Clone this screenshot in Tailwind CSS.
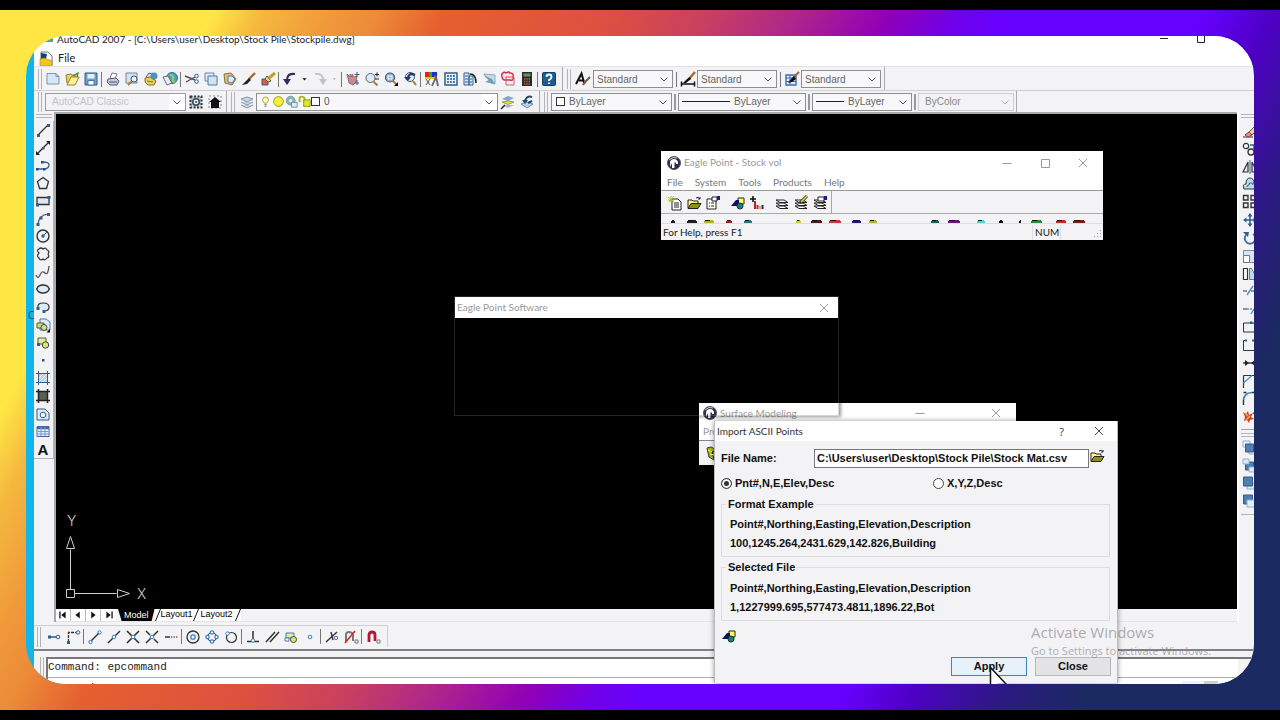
<!DOCTYPE html>
<html lang="en">
<head>
  <meta charset="UTF-8" />
  <meta name="viewport" content="width=device-width, initial-scale=1.0" />
  <title>AutoCAD 2007</title>
  <script src="https://cdn.jsdelivr.net/npm/@tailwindcss/browser@4"></script>
</head>

<body class="bg-black font-['Open_Sans',sans-serif] text-[10px]">
  <div class="h-screen py-2.5">
    <div class="h-full p-[26px] bg-[linear-gradient(118deg,#ffe645_13%,#f5b83f_16%,#f09a3a_20%,#ec8b38_23%,#e5602f_27%,#dd5040_37%,#c84060_43%,#b02888_48%,#9000b8_54%,#7000e8_58%,#6600ff_61%,#6600ff_73%,#5000c8_77%,#2a1a80_83%,#1b2a60_88%)]">
      <div class="relative flex h-full overflow-hidden rounded-[40px] bg-[#10b6ea]">

        <!-- Desktop strip -->
        <div class="flex w-2 shrink-0 items-center overflow-hidden pb-[90px] pl-0.5 text-[#0b3f66]">C</div>

        <!-- AutoCAD -->
        <main class="flex min-w-0 flex-1 flex-col bg-[#f3f2f5]">
          <div class="flex h-3 shrink-0 items-end bg-white pl-[3px]">
            <div class="flex h-3 flex-1 items-start gap-1 overflow-hidden">
              <span class="ml-1 h-1.5 w-3 bg-[#5f9c93]"></span>
              <h1 class="-mt-[5px] text-[10px] leading-4 text-[#222] font-['Lato']">AutoCAD 2007 - [C:\Users\user\Desktop\Stock Pile\Stockpile.dwg]</h1>
            </div>
            <div class="flex h-full w-24 gap-[26px]">
              <svg class="h-3 w-3" viewBox="0 0 12 12" fill="none" stroke="#222"><path d="M2 2.500h8" /></svg>
              <svg class="h-3 w-3" viewBox="0 0 12 12" fill="none" stroke="#222"><path d="M1.500 0v6.500h7V0" /></svg>
            </div>
          </div>
          <nav class="flex h-[18px] shrink-0 items-center gap-1 bg-white pt-[3px] pl-1 text-[11px] text-[#222]">
            <span data-icons="doc"></span>
            <a href="#" class="font-['Lato']">File</a>
          </nav>

          <!-- Toolbars -->
          <div class="flex h-6 shrink-0 items-stretch border-t border-[#e2e1e4] pl-1">
            <div class="flex items-center border-r border-[#aaa] pt-px">
              <span class="mr-px h-5 w-1 border-x border-[#b4b3b7]"></span>
              <div class="flex items-center pr-1" data-tools="new open save | plot preview publish web | cut copy paste brush match | undo caret redo caretoff | pan zoom zoomwin zoomprev | props center palettes sheet markup calc | help"></div>
            </div>
            <div class="flex items-center border-r border-[#aaa] pl-1 pr-[3px] pt-px">
              <span class="mr-1 h-5 w-1 border-x border-[#b4b3b7]"></span>
              <span data-icons="textstyle"></span>
              <div class="ml-0.5 flex h-[18px] w-20 items-center border border-[#8f8f93] bg-[#f8f7fa] pl-[3px]">
                <select aria-label="Text style" class="min-w-0 flex-1 appearance-none bg-transparent text-[#666] font-['Liberation_Sans']"><option>Standard</option></select><span data-icons="chev"></span>
              </div>
              <span class="mx-[3px] h-[15px] w-px bg-[#777]"></span>
              <span data-icons="dimstyle"></span>
              <div class="ml-px flex h-[18px] w-20 items-center border border-[#8f8f93] bg-[#f8f7fa] pl-[3px]">
                <select aria-label="Dimension style" class="min-w-0 flex-1 appearance-none bg-transparent text-[#666] font-['Liberation_Sans']"><option>Standard</option></select><span data-icons="chev"></span>
              </div>
              <span class="mx-[3px] h-[15px] w-px bg-[#777]"></span>
              <span data-icons="tablestyle"></span>
              <div class="ml-px flex h-[18px] w-20 items-center border border-[#8f8f93] bg-[#f8f7fa] pl-[3px]">
                <select aria-label="Table style" class="min-w-0 flex-1 appearance-none bg-transparent text-[#666] font-['Liberation_Sans']"><option>Standard</option></select><span data-icons="chev"></span>
              </div>
            </div>
          </div>
          <div class="flex h-[22px] shrink-0 items-stretch border-t border-[#cfced2] pl-1">
            <div class="flex items-center border-r border-[#aaa] pr-0.5">
              <span class="mr-[3px] h-5 w-1 border-x border-[#b4b3b7]"></span>
              <div class="flex h-[18px] w-[141px] items-center border border-[#9b9b9f] bg-[#f3f2f5] pl-1.5">
                <select aria-label="Workspace" class="min-w-0 flex-1 appearance-none bg-transparent text-[#c4c3c7] font-['Liberation_Sans']"><option>AutoCAD Classic</option></select>
                <span class="flex h-full items-center bg-white" data-icons="chev"></span>
              </div>
              <div class="flex items-center" data-tools="gear home"></div>
            </div>
            <div class="flex items-center border-r border-[#aaa] pl-1 pr-[3px]">
              <span class="mr-0.5 h-5 w-1 border-x border-[#b4b3b7]"></span>
              <div class="flex" data-tools="layers"></div>
              <div class="flex h-[18px] w-[242px] items-center border border-[#8f8f93] bg-[#f8f7fa] pl-0.5">
                <span class="flex" data-icons="bulb sun freeze lock"></span>
                <span class="h-[9px] w-[9px] border border-[#333] bg-white"></span>
                <select aria-label="Layer" class="ml-1 min-w-0 flex-1 appearance-none bg-transparent text-[#555] font-['Liberation_Sans']"><option>0</option></select>
                <span class="flex h-full items-center bg-white" data-icons="chev"></span>
              </div>
              <div class="flex items-center" data-tools="layercur layerprev"></div>
            </div>
            <div class="flex items-center border-r border-[#aaa] pl-1 pr-0.5">
              <span class="mr-[3px] h-5 w-1 border-x border-[#b4b3b7]"></span>
              <div class="flex h-[18px] w-[121px] items-center border border-[#8f8f93] bg-[#f8f7fa] pl-1">
                <span class="mr-1 h-[9px] w-[9px] border border-[#333] bg-white"></span>
                <select aria-label="Colour" class="min-w-0 flex-1 appearance-none bg-transparent text-[#666] font-['Liberation_Sans']"><option>ByLayer</option></select><span data-icons="chev"></span>
              </div>
              <span class="mx-0.5 h-4 w-0.5 bg-[#999]"></span>
              <div class="flex h-[18px] w-32 items-center gap-1 border border-[#8f8f93] bg-[#f8f7fa] pl-[3px]">
                <span class="h-px w-12 bg-[#222]"></span>
                <select aria-label="Linetype" class="min-w-0 flex-1 appearance-none bg-transparent text-[#666] font-['Liberation_Sans']"><option>ByLayer</option></select><span data-icons="chev"></span>
              </div>
              <span class="mx-0.5 h-4 w-0.5 bg-[#999]"></span>
              <div class="flex h-[18px] w-[100px] items-center gap-1 border border-[#8f8f93] bg-[#f8f7fa] pl-[3px]">
                <span class="h-px w-7 bg-[#222]"></span>
                <select aria-label="Lineweight" class="min-w-0 flex-1 appearance-none bg-transparent text-[#666] font-['Liberation_Sans']"><option>ByLayer</option></select><span data-icons="chev"></span>
              </div>
              <span class="mx-0.5 h-4 w-0.5 bg-[#999]"></span>
              <div class="flex h-[18px] w-24 items-center border border-[#d0cfd3] bg-[#f3f2f5] pl-1.5">
                <select aria-label="Plot style" disabled class="min-w-0 flex-1 appearance-none bg-transparent text-[#888] font-['Liberation_Sans']"><option>ByColor</option></select><span class="opacity-40" data-icons="chev"></span>
              </div>
            </div>
          </div>

          <div class="flex min-h-0 flex-1">
            <!-- Draw toolbar -->
            <div class="w-5 shrink-0 pt-0.5">
              <div class="mx-auto mb-[3px] h-1 w-4 border-y border-[#b4b3b7]"></div>
              <div class="flex h-[338px] flex-col border-r border-b border-[#b4b3b7]" data-tools="line xline pline polygon rect arc circle cloud spline ellipse earc insert block point hatch gradient region table text"></div>
            </div>

            <!-- Drawing area -->
            <section class="flex min-w-0 flex-1 flex-col border-l-2 border-t-2 border-[#a9a8ab]">
              <div class="flex min-h-0 flex-1 items-end bg-black pb-1 pl-2">
                <svg class="h-[96px] w-[90px]" viewBox="0 0 90 96" fill="none" stroke="#cfcfcf">
                  <path d="M2.500 80.500h8v8h-8zM6.500 80.500v-40M10.500 84.500h42M6.500 27.500l4 12h-8zM65.500 84.500l-12-4v8z" />
                  <text x="3" y="17" fill="#cfcfcf" stroke="none" class="text-[14px] font-light font-['Inter']">Y</text>
                  <text x="73" y="90" fill="#cfcfcf" stroke="none" class="text-[14px] font-light font-['Inter']">X</text>
                </svg>
              </div>
              <div class="flex h-[13px] shrink-0 items-center border-b border-[#e4e3e7] font-['Liberation_Sans'] text-[9px] text-black">
                <div class="flex h-full items-center divide-x divide-[#bbb] bg-white" data-nav="first prev next last"></div>
                <button class="ml-0.5 h-full bg-black px-1.5 text-white [clip-path:polygon(0_0,100%_0,92%_100%,10%_100%)]">Model</button>
                <button class="flex h-full items-center bg-white"><svg class="h-3 w-1.5" viewBox="0 0 6 12" stroke="#111"><path d="M5.500 0L.5 12" /></svg>Layout1</button>
                <button class="flex h-full items-center gap-0.5 bg-white"><svg class="h-3 w-1.5" viewBox="0 0 6 12" stroke="#111"><path d="M5.500 0L.5 12" /></svg>Layout2<svg class="h-3 w-1.5" viewBox="0 0 6 12" stroke="#111"><path d="M5.500 0L.5 12" /></svg></button>
              </div>
            </section>

            <!-- Modify toolbar -->
            <div class="w-[17px] shrink-0 overflow-hidden border-l-2 border-white pl-0.5 pt-0.5">
              <div class="mb-1 h-1 w-4 border-y border-[#b4b3b7]"></div>
              <div class="flex h-[303px] flex-col" data-tools="erase copyobj mirror offset array move rotate scale stretch trim extend breakpt break join chamfer fillet explode"></div>
              <div class="mt-1 mb-[3px] w-4 border-t border-[#a0a0a4]"></div>
              <div class="mb-0.5 h-1 w-4 border-y border-[#b4b3b7]"></div>
              <div class="flex h-[76px] flex-col border-b border-[#b4b3b7] pb-1" data-tools="front back above under"></div>
            </div>
          </div>

          <!-- Object snap toolbar -->
          <div class="mt-[3px] flex h-[22px] w-fit shrink-0 items-center border-r border-t border-[#cfced2] pl-[3px] pr-[5px]">
            <span class="mr-[3px] h-5 w-1 border-x border-[#b4b3b7]"></span>
            <div class="flex items-center" data-tools="track from | endp midp inter appint ext | cen quad tan | perp par ins node | near none | osnap"></div>
          </div>

          <!-- Command line -->
          <div class="mt-0.5 shrink-0 border-t-2 border-[#808084] pt-1.5">
            <div class="flex h-[27px] pl-1.5">
              <span class="mr-0.5 w-1 border-x border-[#b4b3b7]"></span>
              <div class="min-w-0 flex-1 border-l-2 border-t-2 border-[#77777b] bg-white font-['Liberation_Mono'] text-[11px] text-[#222]">
                <p class="h-[19px] border-b border-[#aaa] pt-0.5 leading-[13px]">Command: epcommand</p>
                <div class="flex h-1.5 overflow-hidden leading-[13px]">
                  <label for="cmd" class="pt-1">Command:</label>
                  <input id="cmd" class="min-w-0 flex-1" />
                  <span class="mt-[3px] mr-5 w-9 border-r-[14px] border-[#cfced2] bg-[#f3f2f5]"></span>
                </div>
              </div>
              <div class="w-4 border-t-2 border-[#77777b] bg-[#f3f2f5] pl-1 pt-0.5" data-icons="up"></div>
            </div>
          </div>
        </main>

        <!-- Surface Modeling -->
        <section class="absolute left-[673px] top-[367px] flex h-[62px] w-[317px] flex-col bg-white text-[#999] font-['Lato']">
          <div class="flex h-5 items-center gap-0.5 pl-[3px]">
            <span data-icons="eagle"></span>
            <h2 class="flex-1">Surface Modeling</h2>
            <span class="flex gap-[60px] pr-3" data-icons="min close"></span>
          </div>
          <p class="h-[17px] w-[15px] overflow-hidden pl-1 leading-4">Products</p>
          <div class="flex-1 border-t border-[#888] bg-[#f3f2f5] pl-1.5 pt-1" data-icons="surf"></div>
        </section>

        <!-- Eagle Point Software -->
        <section class="absolute left-[428px] top-[260px] flex h-[120px] w-[385px] flex-col border border-[#777]/30 shadow-[2px_1px_3px_rgba(0,0,0,0.4)]">
          <div class="flex h-[21px] items-center justify-between bg-white pl-0.5 pr-1.5 text-[#999] font-['Lato']">
            <h2>Eagle Point Software</h2>
            <span data-icons="close"></span>
          </div>
        </section>

        <!-- Eagle Point -->
        <section class="absolute left-[635px] top-[115px] flex h-[89px] w-[442px] flex-col bg-white font-['Lato']">
          <div class="flex h-6 items-center gap-0.5 pl-[5px] text-[#999]">
            <span data-icons="eagle"></span>
            <h2 class="flex-1">Eagle Point - Stock vol</h2>
            <span class="flex gap-[22px] pr-3" data-icons="min max close"></span>
          </div>
          <nav class="flex h-[17px] items-center gap-3 border-b border-[#999] pl-1.5 text-[#777]">
            <a href="#">File</a><a href="#">System</a><a href="#">Tools</a><a href="#">Products</a><a href="#">Help</a>
          </nav>
          <div class="flex h-6 items-center border-b border-[#aaa] bg-[#f3f2f5] pl-1">
            <div class="flex h-full items-center border-r border-[#aaa] pr-0.5 pt-px">
              <div class="flex" data-tools="epnew epopen epprops"></div>
              <div class="ml-1.5 flex" data-tools="shapes graph"></div>
              <div class="ml-1.5 flex" data-tools="stack stackpen stackcard"></div>
            </div>
          </div>
          <div class="flex h-[9px] items-end bg-[#f3f2f5] pl-2" data-icons="strip"></div>
          <div class="flex flex-1 items-center border-t border-[#dddce0] bg-[#f3f2f5] pt-px pl-0.5 text-[#222]">
            <span class="flex-1">For Help, press F1</span>
            <span class="w-[29px] border-x border-[#dddce0] pl-0.5">NUM</span>
            <span class="ml-8" data-icons="grip"></span>
          </div>
        </section>

        <!-- Import ASCII Points -->
        <form class="absolute left-[688px] top-[385px] flex h-[262px] w-[404px] flex-col border-x border-[#bbb] bg-[#f3f2f5] shadow-[0_0_5px_rgba(0,0,0,0.4)] font-['Liberation_Sans'] text-[11px] font-bold leading-[13px] text-[#111]">
          <div class="flex h-5 items-center bg-white pl-0.5 pr-2.5 font-['Lato'] text-[10px] font-normal text-[#333]">
            <h2 class="flex-1">Import ASCII Points</h2>
            <button type="button" class="mr-[27px] font-['Open_Sans'] text-[11px]">?</button>
            <button type="button" aria-label="Close dialog" class="text-[#444]" data-icons="close"></button>
          </div>
          <div class="flex items-center pl-1.5 pt-[7px]">
            <label for="file" class="w-[93px]">File Name:</label>
            <input id="file" value="C:\Users\user\Desktop\Stock Pile\Stock Mat.csv" class="h-[19px] w-[275px] border border-[#777] bg-white px-0.5" />
            <button type="button" aria-label="Browse" class="pb-1" data-icons="epopen"></button>
          </div>
          <div class="flex h-[30px] items-center pl-1.5">
            <label class="flex w-[212px] items-center gap-[3px]"><input type="radio" name="fmt" checked class="h-[11px] w-[11px] appearance-none rounded-full border border-[#444] bg-white checked:bg-[#333] checked:shadow-[inset_0_0_0_2px_white]" />Pnt#,N,E,Elev,Desc</label>
            <label class="flex items-center gap-[3px]"><input type="radio" name="fmt" class="h-[11px] w-[11px] appearance-none rounded-full border border-[#444] bg-white checked:bg-[#333] checked:shadow-[inset_0_0_0_2px_white]" />X,Y,Z,Desc</label>
          </div>
          <fieldset class="ml-1.5 mr-[7px] h-[59px] border border-[#dddce0] pl-2">
            <legend class="-ml-1 px-0.5">Format Example</legend>
            <p class="pt-[7px]">Point#,Northing,Easting,Elevation,Description</p>
            <p class="pt-1.5">100,1245.264,2431.629,142.826,Building</p>
          </fieldset>
          <fieldset class="ml-1.5 mr-[7px] mt-1 h-[60px] border border-[#dddce0] pl-2">
            <legend class="-ml-1 px-0.5">Selected File</legend>
            <p class="pt-2">Point#,Northing,Easting,Elevation,Description</p>
            <p class="pt-1.5">1,1227999.695,577473.4811,1896.22,Bot</p>
          </fieldset>
          <div class="pl-1.5 pt-[7px]" data-icons="shapes"></div>
          <div class="mt-auto flex justify-end gap-2 pr-1.5 pb-[7px]">
            <button type="button" class="h-[19px] w-[76px] border border-[#3b86c6] bg-[#e6f1fb]">Apply</button>
            <button type="button" class="h-[19px] w-[76px] border border-[#b8b8bc] bg-[#e3e2e5]">Close</button>
          </div>
        </form>

        <!-- Activation notice -->
        <div class="absolute left-[1005px] top-[586px] text-[#8a8a8e]/70">
          <p class="text-[15px] leading-5">Activate Windows</p>
          <p class="text-[11px] leading-[18px]">Go to Settings to activate Windows.</p>
        </div>

        <svg class="absolute left-[963px] top-[630px] h-7 w-[18px]" viewBox="0 0 18 28" fill="#fff" stroke="#111" stroke-width="1.500"><path d="M1.500 1.500v22l5-4 3 7 3-1.500-3-6.500h8z" /></svg>
      </div>
    </div>
  </div>

  <script>
    const B = '#2f5f8f', K = '#333', L = '#bcd9ee';
    const stack = '<path d="M2 5h8l4 2.500H6zM2 8h8l4 2.500H6zM2 11h8l4 2.500H6z" fill="#fff" stroke="#222"/>';
    const snapbox = '<path d="M12 11h3v3h-3z" fill="#fff" stroke="#777"/>';

    const icons = {
      doc: '<path d="M3 1h7l4 4v9H3z" fill="#fff" stroke="#678"/><path d="M3 2l6 1-1 5-5 1z" fill="#1d3f70"/><path d="M2 8l4-1 8 3v5H2z" fill="#f2c71c" stroke="#a67f10" stroke-width=".6"/>',
      new: '<path d="M2 2.500h9l3 3V13H2z" fill="#d5e8f6" stroke="#7f95ad"/><path d="M11 2.500v3h3" stroke="#7f95ad"/>',
      open: '<path d="M2 4l5-1 1 1h3v8H3z" fill="#e8d35c" stroke="#96802a"/><path d="M3 14l4-8h8l-4 8z" fill="#fff0a0" stroke="#96802a"/><path d="M9 5l5-3-1 4" stroke="#3a8a3a" stroke-width="1.300"/>',
      save: '<path d="M2 2h12v12H2z" fill="#6f9fd0" stroke="#2f5f8f"/><path d="M4.500 3h7v4.500h-7z" fill="#e6f1fb"/><path d="M5 9.500h6V14H5z" fill="#fff" stroke="#2f5f8f" stroke-width=".8"/>',
      plot: '<path d="M5 7l2-5 5 1-2 5z" fill="#fff" stroke="#778"/><path d="M3 8l8-1 3 3-2 4H5l-3-3z" fill="#c9c9dc" stroke="#557"/><path d="M4 11h8" stroke="#557"/>',
      preview: '<path d="M2 2h11v10H2z" fill="#cfe3f3" stroke="#6f8aa5"/><circle cx="10" cy="8" r="3" fill="#e8f4ff" stroke="#456"/><path d="M8 10l-4 4" stroke="#b07a30" stroke-width="2"/>',
      publish: '<path d="M3 6l3-4 7 2-2 5z" fill="#cfe3f3" stroke="#557"/><circle cx="11" cy="5" r="3.500" fill="#4a90c0"/><path d="M2 7l5-1 6 4-2 4H5l-3-3z" fill="#e8d05a" stroke="#86702a"/><path d="M4 10l6 1" stroke="#86702a"/>',
      web: '<circle cx="10" cy="7" r="5.500" fill="#4da3b8" stroke="#2f6f8f"/><path d="M8 4q4 0 3 4t2 2" stroke="#8fd07a" stroke-width="2"/><path d="M1 6l5-1 4 7-5 2z" fill="#e8eef6" stroke="#667"/>',
      cut: '<path d="M1 5l10 4M2 11l9-5" stroke="#555" stroke-width="1.400"/><circle cx="12.500" cy="5" r="1.800" stroke="#2f5f8f"/><circle cx="12.500" cy="10.500" r="1.800" stroke="#2f5f8f"/>',
      copy: '<path d="M2 2h9v8H2z" fill="#dcebf7" stroke="#6f8aa5"/><path d="M5 5h9v9H5z" fill="#cfe3f3" stroke="#4f7aa5"/>',
      paste: '<path d="M2 3l7-1 5 6-4 6-7-2z" fill="#e0c070" stroke="#8a7040"/><path d="M6 5h4l3 3-3 4-4-1z" fill="#dcebf7" stroke="#4f7aa5"/>',
      brush: '<path d="M14 2L8 8" stroke="#a86a32" stroke-width="2.400"/><path d="M8 7l2 2-4 4-5 1 3-3z" fill="#222"/>',
      match: '<path d="M2 8h6v6H2z" fill="#e85a30" stroke="#335a99"/><path d="M15 2L9 7" stroke="#c8a030" stroke-width="3"/><path d="M7 5l4 5-3 1-3-3z" fill="#f0d860" stroke="#555"/>',
      undo: '<path d="M13 3Q5 2 5 9v4" stroke="#2a2f66" stroke-width="2.200"/><path d="M1 8h8l-4 6z" fill="#2a2f66"/>',
      redo: '<path d="M3 3q8-1 8 6v4" stroke="#c2c2c6" stroke-width="2"/><path d="M7 8h8l-4 6z" fill="#c2c2c6"/>',
      caret: '<path d="M5 7h6l-3 3z" fill="#111"/>',
      caretoff: '<path d="M6 7h4L8 9.500z" fill="#aaa"/>',
      pan: '<path d="M2 3l3 3V3l2 3V3l2 3 3-1-1 6-3 3-4-2z" fill="#c98a8a" stroke="#8a5560" stroke-width=".8"/><path d="M12 1v5M9.500 3.500h5M12 9v5M10 12h4" stroke="#2f5f8f"/>',
      zoom: '<circle cx="6.500" cy="7" r="4.500" fill="#dcebf7" stroke="#567"/><path d="M9.500 10.500l4 4" stroke="#b07a30" stroke-width="2"/><path d="M11 3.500h4M13 1.500v4M11 8h4" stroke="#222"/>',
      zoomwin: '<circle cx="7" cy="6.500" r="4.500" fill="#8fb4d8" stroke="#456" stroke-width="1.200"/><path d="M5 5h4v3H5z" stroke="#fff"/><path d="M10 10l3 3" stroke="#b07a30" stroke-width="2"/><path d="M15 11v4h-4z" fill="#000"/>',
      zoomprev: '<circle cx="8" cy="6" r="4.500" fill="#dcebf7" stroke="#456"/><path d="M13 4Q7 1 6 7" stroke="#23366f" stroke-width="2.400"/><path d="M2 6h7l-3 4z" fill="#23366f"/><path d="M11 10l3 4" stroke="#b07a30" stroke-width="2"/>',
      props: '<path d="M1 1h4v5H1z" fill="#e02020"/><path d="M5 1h3v5H5z" fill="#20b020"/><path d="M8 1h5v5H8z" fill="#2030d0"/><path d="M1 6h11v2H1z" fill="#e8c020"/><path d="M2 8l4 6M6 8l-4 6" stroke="#555"/><path d="M10 5l2 1 2 9M12 6l-4 9" stroke="#666" stroke-width="1.800"/>',
      center: '<path d="M2 2h12v12H2z" fill="#e8f0f8" stroke="#2f5f8f" stroke-width="1.500"/><path d="M4 4h2v2H4zM7 4h2v2H7zM10 4h2v2h-2zM4 7h2v2H4zM7 7h2v2H7zM10 7h2v2h-2zM4 10h2v2H4zM7 10h2v2H7zM10 10h2v2h-2z" fill="#4f7aa5"/>',
      palettes: '<path d="M2 2h5v12H2zM7 5h4v9H7z" fill="#dcebf7" stroke="#2f5f8f"/><path d="M3 5h3M3 8h3M3 11h3M8 8h2M8 11h2" stroke="#2f5f8f"/><path d="M8 3q6 0 6 9" stroke="#222" stroke-width="1.600"/>',
      sheet: '<path d="M3 3l11 1v9l-4-1z" fill="#c5dbe8" stroke="#8fa9bd"/><path d="M2 4l9 4 3 5-10-2 4-2z" fill="#6f9fb8"/>',
      markup: '<path d="M2 3q2-3 4-1 3-2 4 0 4 0 3 4 1 4-3 3H4q-3-2-2-6z" fill="#fbdfe5" stroke="#c83050" stroke-width="1.400"/><path d="M6 6h8v8H6z" stroke="#d05a70"/>',
      calc: '<path d="M3 1h10v14H3z" fill="#2b2b2b"/><path d="M4.500 2.500h7v3h-7z" fill="#5a9a5a"/><path d="M5 8h6M5 10.500h6M5 13h6" stroke="#d05a40" stroke-width="1.400" stroke-dasharray="1.400 .9"/>',
      help: '<rect x="1.500" y="1.500" width="13" height="13" rx="1" fill="#1f5c94" stroke="#123e68"/><path d="M5.500 6q0-2.500 2.500-2.500T10.500 6Q10.500 7.500 8 9v1M8 11.500v1.500" stroke="#fff" stroke-width="1.800"/>',
      textstyle: '<path d="M1 13L6.500 2.500l3 10.500M4 9.500h5" stroke="#111" stroke-width="2"/><path d="M15 6l-5 5-2 3" stroke="#7a5a3a" stroke-width="2"/>',
      dimstyle: '<path d="M1 13h14M1.500 10.500v5M14.500 10.500v5" stroke="#111" stroke-width="1.500"/><path d="M15 1L9 8" stroke="#a86a32" stroke-width="2.400"/><path d="M10 6l1 2-5 4H3l4-4z" fill="#111"/>',
      tablestyle: '<path d="M2 4h10v10H2z" fill="#dcebf7" stroke="#3d6fb0" stroke-width="1.400"/><path d="M2 7h10M2 10.500h10M6 4v10" stroke="#3d6fb0"/><path d="M15 1L9 7" stroke="#a86a32" stroke-width="2.200"/><path d="M10 5l2 3-4 3-4 1 3-4z" fill="#111"/>',
      chev: '<path d="M4.500 6.500L8 10l3.500-3.500" stroke="#555"/>',
      gear: '<path d="M2.500 2.500h11v11h-11z" fill="#c5d0da" stroke="#333" stroke-dasharray="2 1.500" stroke-width="2"/><circle cx="8" cy="8" r="3.200" fill="#eef3f8" stroke="#345" stroke-width="1.500"/><circle cx="8" cy="8" r="1" fill="#345"/>',
      home: '<path d="M2 2h12v12H2z" stroke="#888" stroke-dasharray="2 2"/><path d="M8 3l6 5h-2v6H4V8H2z" fill="#111"/>',
      layers: '<path d="M2 5l6-2 6 2-6 3zM2 8l6 3 6-3M2 11l6 3 6-3" fill="#c8d6e4" stroke="#7f97b0"/>',
      bulb: '<path d="M4.500 6a3.500 3.500 0 117 0q0 2-2 4h-3q-2-2-2-4z" fill="#ffffb0" stroke="#998a30"/><path d="M6.500 12h3M7 14h2" stroke="#555"/>',
      sun: '<circle cx="8" cy="8" r="6" fill="#f5f032" stroke="#8a8a20"/>',
      freeze: '<circle cx="7" cy="7" r="5.500" fill="#8fb0b8" stroke="#7f97a0"/><circle cx="7" cy="7" r="2" fill="#cfe"/><path d="M8 9h7v6H8z" fill="#dcebf7" stroke="#5a80a0"/>',
      lock: '<path d="M2 9V5q0-3 2.500-3T8 4v3" stroke="#a8b818" stroke-width="2.400"/><path d="M7 6h8v8H7z" fill="#e0e82a" stroke="#7a8a10"/>',
      layercur: '<path d="M2 5l6-3 6 2-6 3z" fill="#7fa8cc"/><path d="M2 8l6-1 6 1-6 2.500z" fill="#e8dc50" stroke="#998a30" stroke-width=".8"/><path d="M4 12l4-1 6 0-6 3z" fill="#a8b8c8"/><path d="M1 15l4-4" stroke="#222" stroke-width="1.400"/>',
      layerprev: '<path d="M2 10l6-2 6 2-6 4z" fill="#b8d0e4" stroke="#6f8fb0"/><path d="M13 3Q7 1 6 8M13 7l-4 2" stroke="#23466f" stroke-width="2"/><path d="M3 6h6l-3 4z" fill="#23466f"/>',

      line: `<path d="M3 13L13 3" stroke="${K}" stroke-width="1.300"/><path d="M2 12h3v3H2zM12 2h3v3h-3z" fill="${B}"/>`,
      xline: `<path d="M2 14L14 2" stroke="${K}" stroke-width="1.500"/><path d="M1 11v4h4zM11 1h4v4z" fill="#222"/><path d="M7 7h2.500v2.500H7z" fill="${B}"/>`,
      pline: `<path d="M2 12h8q4-1 4-4t-6-3" stroke="${B}" stroke-width="1.300"/><path d="M1 11h2.500v2.500H1zM8 11h2.500v2.500H8zM6 4h2.500v2.500H6z" fill="#1f4f80"/>`,
      polygon: `<path d="M8 2.500l5.500 4-2 7h-7l-2-7z" fill="#eef3f8" stroke="${K}" stroke-width="1.300"/>`,
      rect: `<path d="M2 4.500h12v7H2z" fill="#e0e6ee" stroke="${K}" stroke-width="1.300"/><path d="M1 10.500h3v3H1zM12.500 3h3v3h-3z" fill="${B}"/>`,
      arc: `<path d="M3 13Q4 4 13 3" stroke="#456" stroke-width="1.200"/><path d="M1.500 12h3v3h-3zM4.500 5.500h3v3h-3zM12 2h3v3h-3z" fill="${B}"/>`,
      circle: `<circle cx="8" cy="8" r="6" fill="#eef3f8" stroke="${K}" stroke-width="1.400"/><path d="M8 8l4-4" stroke="${B}"/><circle cx="8" cy="8" r="1.700" fill="${B}"/>`,
      cloud: `<path d="M4 7q-3-3 0-4 2-2 4 0 3-2 4 1 3 1 1 4 2 3-1 4-2 3-4 1-3 2-4-1-3-2 0-5z" fill="#eef3f8" stroke="${K}" stroke-width="1.200"/>`,
      spline: '<path d="M1 11q2 5 4 0t5-2 4-7" stroke="#555" stroke-width="1.300"/>',
      ellipse: `<ellipse cx="8" cy="8" rx="6" ry="4" fill="#dcebf7" stroke="${K}" stroke-width="1.400"/><path d="M1 7h2v2H1zM13 7h2v2h-2zM7 3h2v2H7z" fill="${B}"/>`,
      earc: `<path d="M3 9q-1-5 5-5t6 4-5 4" stroke="${K}" fill="#dcebf7" stroke-width="1.200"/><path d="M1.500 8h3v3h-3zM7.500 11h3v3h-3z" fill="${B}"/>`,
      insert: '<path d="M5 2h6l4 3v8H5z" fill="#dcebf7" stroke="#4f7aa5"/><path d="M2 6h7v5H2z" fill="#d8dc68" stroke="#555"/><circle cx="9" cy="10.500" r="3" fill="#d0e088" stroke="#444"/><path d="M15 12v3.500h-3.500z" fill="#000"/>',
      block: '<path d="M3 3h8v6H3z" fill="#e8ec90" stroke="#555"/><circle cx="10.500" cy="10" r="3.200" fill="#d8e878" stroke="#444"/><path d="M2 8h3v3H2z" fill="#2f5f8f"/>',
      point: `<path d="M7 7h2.500v2.500H7z" fill="${B}"/>`,
      hatch: `<path d="M3.500 3.500h9v9h-9z" fill="#b8d0ea"/><path d="M3.500 1v14M12.500 1v14M1 3.500h14M1 12.500h14" stroke="${B}"/><path d="M4 8l4-4M4 12l8-8M8 12l4-4" stroke="#fff"/>`,
      gradient: '<path d="M3.500 3.500h9v9h-9z" fill="#5a6050"/><path d="M3.500 1v14M12.500 1v14M1 3.500h14M1 12.500h14" stroke="#222" stroke-width="1.500"/>',
      region: `<path d="M2 3h8l4 4v7H2z" fill="#dcebf7" stroke="${B}"/><circle cx="8" cy="9" r="2.800" fill="#fff" stroke="${B}"/>`,
      table: '<path d="M2 3.500h12v10H2z" fill="#e6eefb" stroke="#4468a8"/><path d="M2 5h12" stroke="#4468a8" stroke-width="2.400"/><path d="M3 8.500h10M3 11h10M6 4v9M10 4v9" stroke="#7a98cc"/>',
      text: '<text x="2.500" y="14" font-size="15" font-weight="bold" font-family="Liberation Sans" fill="#111">A</text>',

      erase: '<path d="M1 14h10" stroke="#333"/><path d="M14 2L7 9l3 3 6-6" fill="#e8d890" stroke="#555"/><path d="M7 9l-4 3 3 2 4-2z" fill="#e090a0" stroke="#a03030"/>',
      copyobj: `<circle cx="4" cy="5" r="2.700" stroke="${K}" stroke-width="1.200"/><circle cx="9" cy="11" r="3" stroke="${K}" stroke-width="1.300"/><path d="M8 4h4v5" stroke="${B}" stroke-width="1.600"/>`,
      mirror: `<path d="M6 3v10H1zM10 3v10h5z" fill="#dcebf7" stroke="${K}" stroke-width="1.200"/><path d="M8 1v14" stroke="${B}"/>`,
      offset: `<path d="M2 13q-2-5 2-5 0-6 4-6t4 6q4 0 2 5z" fill="${L}" stroke="${K}"/><path d="M5 11q0-2 2-2 0-3 2-2 2 0 2 2" stroke="${B}"/>`,
      array: `<path d="M1.500 1.500h4.500v4.500h-4.500zM9 1.500h4.500v4.500H9zM1.500 9h4.500v4.500h-4.500zM9 9h4.500v4.500H9z" stroke="${K}" stroke-width="1.400"/>`,
      move: `<path d="M8 2v12M2 8h12" stroke="${B}" stroke-width="1.600"/><path d="M5.500 4.500L8 1l2.500 3.500zM5.500 11.500L8 15l2.500-3.500zM4.500 5.500L1 8l3.500 2.500zM11.500 5.500L15 8l-3.500 2.500z" fill="${B}"/>`,
      rotate: `<path d="M4 5a5.300 5.300 0 107-1" stroke="#456f98" stroke-width="1.900"/><path d="M1 2h6l-1 5z" fill="${B}"/>`,
      scale: '<path d="M1.500 2.500h13v12h-13z" fill="#d5e3f5" stroke="#888"/><path d="M1.500 7.500h6v7h-6z" fill="#fff" stroke="#777"/>',
      stretch: `<path d="M1.500 2.500h4v11h-4z" fill="#fff" stroke="${K}" stroke-width="1.200"/><path d="M7.500 13.500v-11h2l6 11z" fill="${L}" stroke="#678"/>`,
      trim: `<path d="M1 8h4M9 8h6" stroke="${K}"/><path d="M5 12l6-9" stroke="#4f8fd0" stroke-width="1.400"/>`,
      extend: `<path d="M1 8h4" stroke="${K}"/><path d="M5 8h6" stroke="${B}" stroke-dasharray="2 1"/><path d="M9 13l6-10" stroke="#4f8fd0" stroke-width="1.300"/>`,
      breakpt: `<path d="M1.500 4h14v9h-14z" fill="#eef3f8" stroke="${K}"/><path d="M8 2.500h2.500V5H8z" fill="${B}"/>`,
      break: `<path d="M4 3.500H1.500v10h14v-10H11" fill="#eef3f8" stroke="${K}"/><path d="M3 2.500h2v2H3zM10 2.500h2v2h-2z" fill="${B}"/>`,
      join: '<path d="M1 8h14" stroke="#222" stroke-width="1.300"/><path d="M3 5l4 3-4 3zM13 5L9 8l4 3z" fill="#222"/>',
      chamfer: `<path d="M1.500 15V2.500M1.500 2.500h14" stroke="${K}" stroke-width="1.200"/><path d="M1.500 10L10 2.500" stroke="#4f8fd0" stroke-width="1.300"/>`,
      fillet: `<path d="M1.500 15V10M10 2.500h6M1.500 2.500h3" stroke="${K}" stroke-width="1.400"/><path d="M1.500 10Q2 3 10 2.500" stroke="#3f7fc0" stroke-width="1.700"/>`,
      explode: '<path d="M1 4l3 2 2-3 1 4 4-2-2 4 3 2-4 1-1 3-2-3-3 1 1-4z" fill="#d04030"/><path d="M4 12l4-4M3 5l3 3" stroke="#f0b030" stroke-width="1.600"/><path d="M11 6l3-4" stroke="#3f7fc0" stroke-width="1.500"/>',
      front: '<path d="M1 1h7v6H1zM7 9h7v5H7z" fill="#e8f2fb" stroke="#8fb0d0"/><path d="M3.500 4h8v8h-8z" fill="#4f7fb0" stroke="#2f5f8f"/>',
      back: '<path d="M3.500 4h8v8h-8z" fill="#4f7fb0" stroke="#2f5f8f"/><path d="M1 1h6v5H1zM7 9h7v5H7z" fill="#dcebf7" stroke="#8fb0d0"/>',
      above: '<path d="M5 8h9v6H5z" fill="#dcebf7" stroke="#8fb0d0"/><path d="M1.500 2h9v9h-9z" fill="#4f7fb0" stroke="#2f5f8f"/>',
      under: '<path d="M1.500 2h9v9h-9z" fill="#4f7fb0" stroke="#2f5f8f"/><path d="M5 7h9v7H5z" fill="#e0eefa" stroke="#8fb0d0"/>',

      track: `<path d="M4 8h6" stroke="#456" stroke-width="1.600"/><path d="M2 6.500h3v3H2z" fill="${B}"/><circle cx="12" cy="8" r="1.800" stroke="${B}"/>`,
      from: `<path d="M3.500 13V3.500H11" stroke="${K}" stroke-width="1.300" stroke-dasharray="3 1"/><path d="M2 12h3v3H2z" fill="${B}"/><circle cx="13" cy="3.500" r="1.700" stroke="${B}"/>`,
      endp: `<path d="M4 12l8-8" stroke="${K}" stroke-width="1.400"/><circle cx="3.500" cy="13" r="1.700" stroke="#3f7fc0"/><circle cx="12.500" cy="3.500" r="1.700" stroke="#3f7fc0"/>`,
      midp: `<path d="M2 14L14 2" stroke="${K}" stroke-width="1.400"/><circle cx="8" cy="8" r="1.800" fill="#fff" stroke="#3f7fc0"/>`,
      inter: `<path d="M2 2l12 12M2 14L14 2" stroke="${K}" stroke-width="1.600"/><circle cx="8" cy="8" r="1.800" fill="#fff" stroke="#3f7fc0"/>`,
      appint: `<path d="M2 2l4 4M10 10l4 4M2 14L14 2" stroke="${K}" stroke-width="1.500"/><circle cx="8" cy="8" r="1.800" fill="#fff" stroke="#3f7fc0"/>`,
      ext: `<path d="M2 8h5" stroke="${K}" stroke-width="1.400"/><path d="M8 8h7" stroke="${K}" stroke-dasharray="1.500 1"/>`,
      cen: `<circle cx="8" cy="8" r="6" fill="#eef3f8" stroke="${K}" stroke-width="1.300"/><circle cx="8" cy="8" r="2.200" fill="#fff" stroke="#3f7fc0" stroke-width="1.300"/>`,
      quad: `<circle cx="8" cy="8" r="4.500" stroke="${K}"/><g fill="#fff" stroke="#3f7fc0" stroke-width="1.200"><circle cx="8" cy="3.500" r="1.700"/><circle cx="8" cy="12.500" r="1.700"/><circle cx="3.500" cy="8" r="1.700"/><circle cx="12.500" cy="8" r="1.700"/></g>`,
      tan: `<circle cx="8.500" cy="8.500" r="5" stroke="${K}" stroke-width="1.200"/><circle cx="4.500" cy="4.500" r="1.700" fill="#fff" stroke="#3f7fc0"/>`,
      perp: `<path d="M8 2v9M2 12.500h12" stroke="${K}" stroke-width="1.500"/><circle cx="8" cy="11.500" r="1.700" fill="#fff" stroke="#3f7fc0"/>`,
      par: `<path d="M2 13L11 3M6 13l9-10" stroke="${K}" stroke-width="1.500"/>`,
      ins: '<path d="M3 4h8v5H3z" fill="#e8ec90" stroke="#3f7fc0"/><circle cx="10.500" cy="10.500" r="3" fill="#d8e878" stroke="#444"/><path d="M2 9h4v3H2z" fill="#fff" stroke="#3f7fc0"/>',
      node: '<circle cx="8" cy="8" r="1.800" stroke="#3f7fc0"/>',
      near: `<path d="M2 13L13 3M7 3l2 8" stroke="${K}" stroke-width="1.400"/><circle cx="12" cy="9" r="1.700" fill="#fff" stroke="#3f7fc0"/>`,
      none: '<path d="M3 13V6q0-3 3-3t4 3v6" stroke="#777" stroke-width="2"/><path d="M2 14L12 2" stroke="#d03030" stroke-width="1.700"/>' + snapbox,
      osnap: '<path d="M4 13V6q0-3 3-3t3 3v6" stroke="#b01838" stroke-width="2.800"/>' + snapbox,

      first: '<path d="M4.500 4v8" stroke="#111" stroke-width="1.500"/><path d="M11 4v8L6 8z" fill="#111"/>',
      prev: '<path d="M10 4v8L5 8z" fill="#111"/>',
      next: '<path d="M6 4v8l5-4z" fill="#111"/>',
      last: '<path d="M11.500 4v8" stroke="#111" stroke-width="1.500"/><path d="M5 4v8l5-4z" fill="#111"/>',
      up: '<path d="M3 9l3-3 3 3" stroke="#333" stroke-width="1.500"/>',

      eagle: '<circle cx="8" cy="8" r="6.500" fill="#2a2c50" stroke="#555"/><path d="M4 12V7q1-3 4-3t4 3v2H10V7.500H8.500V13H6V8z" fill="#fff"/><path d="M3 5q4-4 8-2" stroke="#cfd2e8"/>',
      min: '<path d="M3.500 8.500h9" stroke="currentColor"/>',
      max: '<path d="M4.500 4.500h8v8h-8z" stroke="currentColor"/>',
      close: '<path d="M4 4l8 8M12 4l-8 8" stroke="currentColor"/>',
      epnew: '<path d="M5 4h6l3 3v8H5z" fill="#fff" stroke="#222"/><path d="M7 8h5M7 10h5M7 12h5" stroke="#222"/><path d="M1 2l6 5M7 1L2 7M1 5h6M4 1v6" stroke="#b8b820"/>',
      epopen: '<path d="M2 13V5h4l1 1h5v2" fill="#ffff80" stroke="#222"/><path d="M2 13.500l3-5h10l-3 5z" fill="#8f8f18" stroke="#222"/><path d="M10 3q3-2 4 1m0-2v2h-2" stroke="#222"/>',
      epprops: '<path d="M2 4h9v10H2z" fill="#fff" stroke="#222"/><path d="M4 8h1M6 8h3M4 11h1M6 11h3" stroke="#222"/><path d="M7 2h5v4H7z" fill="#fff" stroke="#222"/><path d="M12 1h3v4h-3z" fill="#1818a0"/>',
      shapes: '<path d="M8 3h6v6H8z" fill="#ffff60" stroke="#222"/><path d="M1 11l5-6h3v6z" fill="#101060"/><circle cx="10" cy="11" r="3" fill="#18806a" stroke="#0a3a3a"/>',
      graph: '<path d="M4 1v6M1 4h6" stroke="#111" stroke-width="1.600"/><path d="M6 6v8" stroke="#c02020" stroke-width="2"/><path d="M8.500 14v-4" stroke="#d02020" stroke-width="2"/><path d="M11 14v-3" stroke="#e8c020" stroke-width="2"/><path d="M13.500 14v-4" stroke="#2020c0" stroke-width="2"/>',
      stack: stack,
      stackpen: stack + '<path d="M14 1L7 8" stroke="#222" stroke-width="3"/><path d="M14 1L8 7" stroke="#f0e040" stroke-width="1.600"/>',
      stackcard: stack + '<path d="M6 2h6v4H6z" fill="#fff" stroke="#222"/><path d="M12 1h3v4h-3z" fill="#1818a0"/>',
      surf: '<path d="M2 3l4-1 4 2 4 8-5 3-5-3z" fill="#a8b818" stroke="#333"/><path d="M7 7l5-2 2 7-5 2z" fill="#30a060" stroke="#222"/><path d="M3 5l4 2M5 9l4 1" stroke="#ffff60"/>',
    };

    const svg = (name, size = 16) =>
      `<svg width="${size}" height="${size}" viewBox="0 0 16 16" fill="none">${icons[name]}</svg>`;

    const widths = { caret: 'w-[11px]', caretoff: 'w-[11px]' };

    document.querySelectorAll('[data-tools]').forEach(bar => {
      const column = bar.classList.contains('flex-col');
      bar.innerHTML = bar.dataset.tools.split(' ').map(name => {
        if (name === '|') return '<span class="mx-px h-[15px] w-px bg-[#777]"></span>';
        const box = column ? 'min-h-0 flex-1 w-[18px]' : `h-[18px] ${widths[name] || 'w-[19px]'}`;
        return `<button type="button" aria-label="${name}" class="flex shrink-0 items-center justify-center overflow-hidden ${box}">${svg(name)}</button>`;
      }).join('');
    });

    document.querySelectorAll('[data-nav]').forEach(bar => {
      bar.innerHTML = bar.dataset.nav.split(' ').map(name =>
        `<button type="button" aria-label="${name}" class="flex h-full w-[15px] items-center justify-center">${svg(name, 14)}</button>`).join('');
    });

    // lower toolbar of the Eagle Point window, only its top edge shows
    const strip = [[2, '#222', 4], [18, '#222', 10], [35, '#b8b020', 10], [57, '#a02020', 6], [75, '#207a7a', 8], [127, '#d8d020', 5], [142, '#501818', 11], [160, '#d03040', 12], [183, '#181880', 9], [200, '#b8b020', 8], [262, '#186060', 8], [279, '#701080', 12], [308, '#40d8d8', 8], [330, '#111', 4], [350, '#111', 2], [362, '#209030', 11], [387, '#d02020', 10], [404, '#801818', 12]];

    document.querySelectorAll('[data-icons]').forEach(el => {
      if (el.dataset.icons === 'strip') {
        el.innerHTML = '<svg class="h-1 w-[430px]" viewBox="0 0 430 4">' +
          strip.map(([x, c, w]) => `<path d="M${x} 4V2h2V1h${w - 3}v1h1v2z" fill="${c}"/><path d="M${x + 1} 1.500h${w / 2}" stroke="#111"/>`).join('') + '</svg>';
      } else if (el.dataset.icons === 'grip') {
        el.innerHTML = '<svg width="10" height="12" viewBox="0 0 10 12" fill="#aaa"><path d="M7 3h1v1H7zM7 6h1v1H7zM7 9h1v1H7zM4 6h1v1H4zM4 9h1v1H4zM1 9h1v1H1z"/></svg>';
      } else {
        const size = { bulb: 13, sun: 13, freeze: 13, lock: 13 };
        el.innerHTML = el.dataset.icons.split(' ').map(n => svg(n, size[n] || 16)).join('');
      }
    });
  </script>
</body>
</html>
